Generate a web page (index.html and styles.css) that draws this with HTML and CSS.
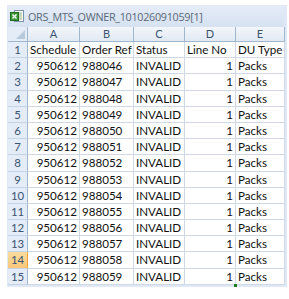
FILE: index.html
```html
<!DOCTYPE html>
<html>
<head>
<meta charset="utf-8">
<link rel="stylesheet" href="styles.css">
</head>
<body>
<div class="window">
  <div class="titlebar">
    <svg class="xlicon" width="14" height="13" viewBox="0 0 14 13">
      <rect x="4.5" y="0.5" width="9" height="11" fill="#fff" stroke="#7b8fa8"/>
      <line x1="7" y1="3" x2="12" y2="3" stroke="#8fb07a"/>
      <line x1="7" y1="5" x2="12" y2="5" stroke="#8fb07a"/>
      <line x1="7" y1="7" x2="12" y2="7" stroke="#8fb07a"/>
      <line x1="7" y1="9" x2="12" y2="9" stroke="#8fb07a"/>
      <rect x="0.5" y="2.5" width="8" height="8" fill="#3f9a3a" stroke="#1f6b22"/>
      <path d="M2.5 4.5 L6.5 8.5 M6.5 4.5 L2.5 8.5" stroke="#fff" stroke-width="1.3"/>
    </svg>
    <span class="title">ORS_MTS_OWNER_101026091059[1]</span>
  </div>
  <div class="grid">
    <div class="ch corner"><span class="tri"></span></div>
    <div class="ch">A</div><div class="ch">B</div><div class="ch">C</div><div class="ch">D</div><div class="ch">E</div>

    <div class="rh">1</div><div class="c">Schedule</div><div class="c">Order Ref</div><div class="c">Status</div><div class="c">Line No</div><div class="c">DU Type</div>
    <div class="rh">2</div><div class="c r">950612</div><div class="c">988046</div><div class="c">INVALID</div><div class="c r">1</div><div class="c">Packs</div>
    <div class="rh">3</div><div class="c r">950612</div><div class="c">988047</div><div class="c">INVALID</div><div class="c r">1</div><div class="c">Packs</div>
    <div class="rh">4</div><div class="c r">950612</div><div class="c">988048</div><div class="c">INVALID</div><div class="c r">1</div><div class="c">Packs</div>
    <div class="rh">5</div><div class="c r">950612</div><div class="c">988049</div><div class="c">INVALID</div><div class="c r">1</div><div class="c">Packs</div>
    <div class="rh">6</div><div class="c r">950612</div><div class="c">988050</div><div class="c">INVALID</div><div class="c r">1</div><div class="c">Packs</div>
    <div class="rh">7</div><div class="c r">950612</div><div class="c">988051</div><div class="c">INVALID</div><div class="c r">1</div><div class="c">Packs</div>
    <div class="rh">8</div><div class="c r">950612</div><div class="c">988052</div><div class="c">INVALID</div><div class="c r">1</div><div class="c">Packs</div>
    <div class="rh">9</div><div class="c r">950612</div><div class="c">988053</div><div class="c">INVALID</div><div class="c r">1</div><div class="c">Packs</div>
    <div class="rh">10</div><div class="c r">950612</div><div class="c">988054</div><div class="c">INVALID</div><div class="c r">1</div><div class="c">Packs</div>
    <div class="rh">11</div><div class="c r">950612</div><div class="c">988055</div><div class="c">INVALID</div><div class="c r">1</div><div class="c">Packs</div>
    <div class="rh">12</div><div class="c r">950612</div><div class="c">988056</div><div class="c">INVALID</div><div class="c r">1</div><div class="c">Packs</div>
    <div class="rh">13</div><div class="c r">950612</div><div class="c">988057</div><div class="c">INVALID</div><div class="c r">1</div><div class="c">Packs</div>
    <div class="rh active">14</div><div class="c r">950612</div><div class="c">988058</div><div class="c">INVALID</div><div class="c r">1</div><div class="c">Packs</div>
    <div class="rh">15</div><div class="c r">950612</div><div class="c">988059</div><div class="c">INVALID</div><div class="c r handle-cell">1<span class="handle"></span></div><div class="c">Packs</div>
  </div>
</div>
</body>
</html>
```
FILE: styles.css
```css
html, body {
  margin: 0;
  padding: 0;
  background: #fff;
}
body {
  font-family: Lato, "Open Sans", sans-serif;
  color: #111;
}
.window {
  margin: 5px 2px 0 7px;
  width: 280px;
  background: #dfe8f4;
  padding: 0 3px 2px 1px;
  box-sizing: border-box;
}
.titlebar {
  height: 22px;
  display: flex;
  align-items: center;
  gap: 4px;
  padding-left: 2px;
  background: linear-gradient(#e4ecf7, #d6e2f1);
}
.xlicon {
  flex: none;
}
.title {
  font-family: "Open Sans", sans-serif;
  font-size: 10.8px;
  color: #5a6878;
  letter-spacing: -0.3px;
}
.grid {
  display: grid;
  grid-template-columns: 20px 52px 54px 51px 51px 49px;
  grid-template-rows: 15px repeat(15, 16.2px);
  background: #fff;
  font-size: 11.6px;
}
.ch {
  background: linear-gradient(#f3f6fb, #e2e9f3);
  border-right: 1px solid #9eb6ce;
  border-bottom: 1px solid #9eb6ce;
  color: #3a5473;
  text-align: center;
  line-height: 14px;
  font-size: 11px;
  box-sizing: border-box;
}
.corner {
  position: relative;
  background: #e4ecf7;
}
.tri {
  position: absolute;
  right: 2px;
  bottom: 2px;
  width: 0;
  height: 0;
  border-left: 9px solid transparent;
  border-bottom: 9px solid #b9c9dc;
}
.rh {
  background: #e4ecf7;
  border-right: 1px solid #9eb6ce;
  border-bottom: 1px solid #c5d3e3;
  color: #3a5473;
  text-align: center;
  font-size: 11.4px;
  line-height: 15px;
  box-sizing: border-box;
}
.rh.active {
  background: linear-gradient(#fbdca0, #f8c77a);
  border-right-color: #f2a43a;
}
.c {
  border-right: 1px solid #d0d7e5;
  border-bottom: 1px solid #d0d7e5;
  padding: 0 2px;
  line-height: 15px;
  white-space: nowrap;
  overflow: hidden;
  box-sizing: border-box;
}
.c.r {
  text-align: right;
}
.handle-cell {
  position: relative;
  overflow: visible;
}
.handle {
  position: absolute;
  right: -2px;
  bottom: -3px;
  width: 3px;
  height: 3px;
  background: #1e7b1e;
}
```
